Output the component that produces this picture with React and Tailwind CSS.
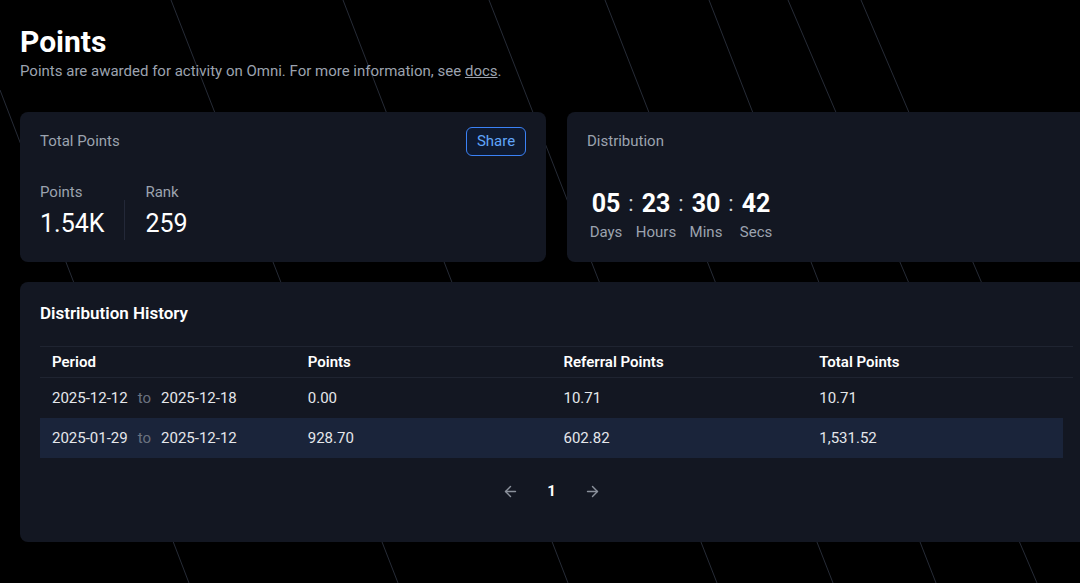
import React from "react";
import { ArrowLeft, ArrowRight } from "lucide-react";

const lines = [
	[0, 90, 189, 583],
	[171, 0, 398, 583],
	[343, 0, 568, 583],
	[489, 0, 717, 583],
	[605, 0, 833, 583],
	[709, 0, 936, 583],
	[788, 0, 1037, 583],
	[861, 0, 1100, 560],
];

const history = [
	{ from: "2025-12-12", to: "2025-12-18", points: "0.00", referral: "10.71", total: "10.71" },
	{ from: "2025-01-29", to: "2025-12-12", points: "928.70", referral: "602.82", total: "1,531.52" },
];

const countdown = [
	{ value: "05", label: "Days" },
	{ value: "23", label: "Hours" },
	{ value: "30", label: "Mins" },
	{ value: "42", label: "Secs" },
];

const Backdrop = () => (
	<svg className="absolute inset-0 pointer-events-none" width="1080" height="583">
		{lines.map(([x1, y1, x2, y2], i) => (
			<line key={i} x1={x1} y1={y1} x2={x2} y2={y2} stroke="#262b36" strokeWidth="1" />
		))}
	</svg>
);

const Card = ({ children, className = "" }) => (
	<div className={`rounded-lg bg-[#131722] ${className}`}>{children}</div>
);

export default function App() {
	return (
		<div
			className="relative w-[1080px] h-[583px] overflow-hidden bg-black text-white"
			style={{ fontFamily: "Roboto, 'Liberation Sans', sans-serif" }}>
			<Backdrop />
			<div className="relative w-[1113px] px-5 pt-[24px]">
				<h1 className="text-3xl font-bold leading-9">Points</h1>
				<p className="text-[15px] leading-5 text-[#9ca3af] mt-[1px]">
					Points are awarded for activity on Omni. For more information, see{" "}
					<span className="underline">docs</span>.
				</p>

				<div className="grid grid-cols-2 gap-[21px] mt-[31px]">
					<Card className="px-5 pt-[15px] pb-[22px]">
						<div className="flex items-center justify-between h-[29px]">
							<p className="text-[15px] text-[#9ca3af]">Total Points</p>
							<button className="h-[29px] w-[60px] rounded-md border border-[#3b82f6] bg-[#0f1a30] text-[15px] text-[#60a5fa]">
								Share
							</button>
						</div>
						<div className="flex mt-[26px]">
							<div className="pr-5">
								<p className="text-[15px] leading-5 text-[#9ca3af]">Points</p>
								<p className="text-[25px] leading-8 mt-1.5">1.54K</p>
							</div>
							<div className="w-px h-10 self-end bg-[#232838]" />
							<div className="pl-5">
								<p className="text-[15px] leading-5 text-[#9ca3af]">Rank</p>
								<p className="text-[25px] leading-8 mt-1.5">259</p>
							</div>
						</div>
					</Card>

					<Card className="px-5 pt-[15px] pb-[20px]">
						<div className="flex items-center h-[29px]">
							<p className="text-[15px] text-[#9ca3af]">Distribution</p>
						</div>
						<div className="flex mt-[33px] -ml-px">
							{countdown.map((c, i) => (
								<React.Fragment key={c.label}>
									{i > 0 && (
										<span className="w-[10px] text-center text-[22px] leading-[30px] text-[#d1d5db]">:</span>
									)}
									<div className="w-[40px] flex flex-col items-center">
										<span className="text-[25px] font-bold leading-[30px]">{c.value}</span>
										<span className="text-[15px] leading-5 mt-[3px] text-[#9ca3af] whitespace-nowrap">{c.label}</span>
									</div>
								</React.Fragment>
							))}
						</div>
					</Card>
				</div>

				<Card className="mt-[20px] px-5 pt-[19px] pb-5">
					<h2 className="text-[17px] font-semibold leading-6">Distribution History</h2>
					<div className="mt-[21px] border-y border-[#1f2431]">
						<div className="grid grid-cols-4 w-[1023px] h-[30px] items-center text-[15px] font-semibold">
							<p className="px-3">Period</p>
							<p className="px-3">Points</p>
							<p className="px-3">Referral Points</p>
							<p className="px-3">Total Points</p>
						</div>
					</div>
					{history.map((row, i) => (
						<div
							key={i}
							className={`grid grid-cols-4 w-[1023px] h-10 items-center text-[15px] text-[#e5e7eb] ${
								i === 1 ? "bg-[#1a243a]" : ""
							}`}>
							<p className="px-3">
								{row.from}
								<span className="mx-2.5 text-[#6b7280]">to</span>
								{row.to}
							</p>
							<p className="px-3">{row.points}</p>
							<p className="px-3">{row.referral}</p>
							<p className="px-3">{row.total}</p>
						</div>
					))}
					<div className="w-[1023px] flex justify-center items-center gap-7 pt-[23px] pb-[21px]">
						<ArrowLeft size={17} className="text-[#8b919c]" />
						<span className="text-[15px] leading-5 font-bold">1</span>
						<ArrowRight size={17} className="text-[#8b919c]" />
					</div>
				</Card>
			</div>
		</div>
	);
}
